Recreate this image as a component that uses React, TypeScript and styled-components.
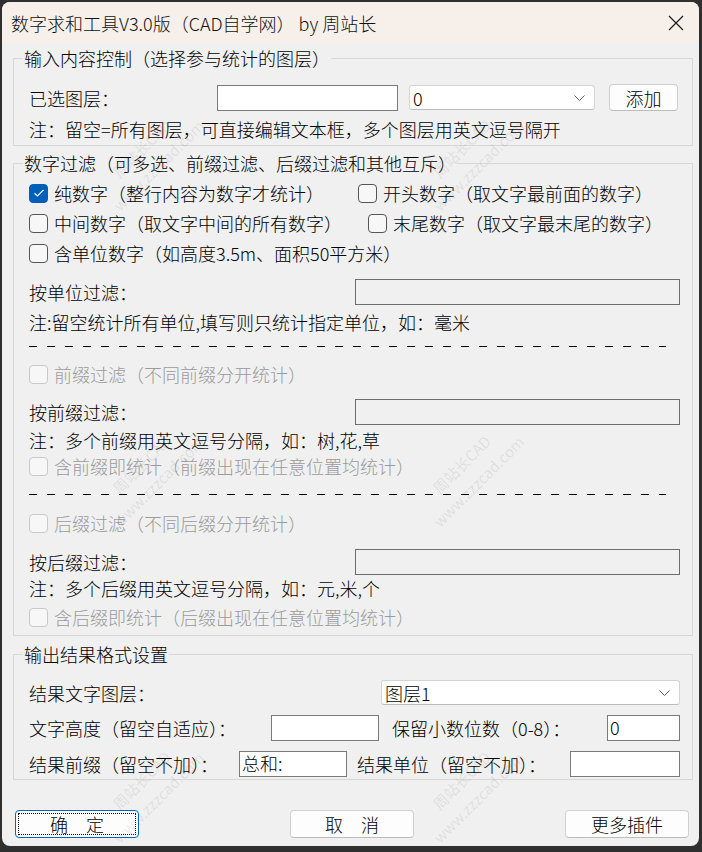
import React from 'react';
import styled, { createGlobalStyle } from 'styled-components';

const GlobalStyle = createGlobalStyle`
  html, body { margin: 0; padding: 0; background: #2f2f2f; height: 852px; overflow: hidden; }
  body { font-family: "Noto Sans CJK SC", "Noto Sans", sans-serif; }
  * { box-sizing: border-box; }
`;

const Window = styled.div`
  position: relative;
  margin: 2px 0 0 2px;
  width: 697px;
  height: 844px;
  background: #f0f0f0;
  border-radius: 8px;
  overflow: hidden;
  display: flex;
  flex-direction: column;
  font-family: "Noto Sans CJK SC", sans-serif;
  font-size: 18px;
  color: #000;
`;

const TitleBar = styled.div`
  height: 41px;
  flex: none;
  background: #f7f0ea;
  display: flex;
  align-items: center;
  justify-content: space-between;
  padding: 0 15px 0 9px;
`;

const TitleText = styled.span`
  font-size: 18px;
  line-height: 24px;
  font-weight: 300;
  color: #111;
  white-space: pre;
`;

const Content = styled.div`
  padding: 0 6px 0 11px;
  display: flex;
  flex-direction: column;
`;

const Group = styled.fieldset<{ $mt: number; $pb: number }>`
  margin: ${p => p.$mt}px 0 0 0;
  padding: 0 12px ${p => p.$pb}px 15px;
  border: 1px solid #d7d7d7;
  min-inline-size: 0;
  display: flex;
  flex-direction: column;
`;

const Legend = styled.legend`
  font-size: 18px;
  line-height: 24px;
  padding: 0 1px;
  margin-left: -6px;
  font-weight: 300;
`;

const Row = styled.div<{ $mt?: number; $h: number }>`
  margin-top: ${p => p.$mt ?? 0}px;
  height: ${p => p.$h}px;
  display: flex;
  align-items: center;
`;

const Label = styled.span<{ $w?: number; $ml?: number; $disabled?: boolean }>`
  font-size: 18px;
  line-height: 24px;
  font-weight: 300;
  white-space: nowrap;
  color: ${p => (p.$disabled ? '#9b9b9b' : '#000')};
  ${p => (p.$w ? `width: ${p.$w}px; flex: none;` : '')}
  margin-left: ${p => p.$ml ?? 0}px;
`;

const Note = styled.div<{ $mt?: number }>`
  margin-top: ${p => p.$mt ?? 0}px;
  font-size: 18px;
  line-height: 24px;
  font-weight: 300;
  white-space: nowrap;
`;

const Edit = styled.div<{ $w: number; $h?: number; $ml?: number; $disabled?: boolean; $auto?: boolean }>`
  width: ${p => p.$w}px;
  height: ${p => p.$h ?? 26}px;
  flex: none;
  margin-left: ${p => (p.$auto ? 'auto' : `${p.$ml ?? 0}px`)};
  background: ${p => (p.$disabled ? '#f0f0f0' : '#fff')};
  border: 1px solid ${p => (p.$disabled ? '#6d6d6d' : '#7a7a7a')};
  padding: 1px 2px;
  font-size: 18px;
  line-height: 20px;
  font-weight: 300;
  white-space: nowrap;
`;

const Combo = styled.div<{ $w: number; $ml?: number; $auto?: boolean }>`
  width: ${p => p.$w}px;
  height: 25px;
  flex: none;
  margin-left: ${p => (p.$auto ? 'auto' : `${p.$ml ?? 0}px`)};
  background: #fff;
  border: 1px solid #d4d4d4;
  border-bottom-color: #bdbdbd;
  border-radius: 3px;
  display: flex;
  align-items: center;
  justify-content: space-between;
  padding: 0 9px 0 3px;
  font-size: 18px;
  line-height: 22px;
  font-weight: 300;
`;

const Button = styled.button<{ $w: number; $h: number; $ml?: number; $default?: boolean }>`
  width: ${p => p.$w}px;
  height: ${p => p.$h}px;
  flex: none;
  margin-left: ${p => p.$ml ?? 0}px;
  background: #fdfdfd;
  border: 1px solid ${p => (p.$default ? '#0067c0' : '#d0d0d0')};
  border-bottom-color: ${p => (p.$default ? '#0067c0' : '#bcbcbc')};
  border-radius: 4px;
  padding: 2px;
  font-family: "Noto Sans CJK SC", sans-serif;
  font-size: 18px;
  font-weight: 300;
  color: #000;
  display: flex;
  cursor: default;
`;

const ButtonFace = styled.span<{ $focus?: boolean }>`
  flex: 1;
  display: flex;
  align-items: center;
  justify-content: center;
  border: 1px dotted ${p => (p.$focus ? '#000' : 'transparent')};
  line-height: 20px;
  white-space: pre;
`;

const CheckWrap = styled.label<{ $w?: number; $ml?: number }>`
  display: flex;
  align-items: center;
  gap: 6px;
  ${p => (p.$w ? `width: ${p.$w}px; flex: none;` : '')}
  margin-left: ${p => p.$ml ?? 0}px;
`;

const Box = styled.span<{ $checked?: boolean; $disabled?: boolean }>`
  width: 19px;
  height: 19px;
  flex: none;
  border-radius: 4px;
  display: flex;
  align-items: center;
  justify-content: center;
  background: ${p => (p.$checked ? '#005fb8' : '#f7f7f7')};
  border: 1px solid
    ${p => (p.$checked ? '#005fb8' : p.$disabled ? '#c9c9c9' : '#555555')};
`;

const Dashes = styled.div<{ $mt?: number }>`
  margin-top: ${p => p.$mt ?? 0}px;
  height: 24px;
  width: 637px;
  flex: none;
  background-image: repeating-linear-gradient(to right, #000 0 8px, transparent 8px 18px);
  background-size: 100% 1px;
  background-position: 0 12px;
  background-repeat: no-repeat;
`;

const ButtonBar = styled.div`
  margin-top: 30px;
  padding: 0 4px 0 2px;
  display: flex;
  justify-content: space-between;
`;

const Watermark = styled.div`
  position: absolute;
  top: -3px;
  left: -12px;
  display: grid;
  grid-template-columns: 320px 320px;
  grid-auto-rows: 316px;
  pointer-events: none;
`;

const MarkCell = styled.div`
  display: flex;
  align-items: center;
  justify-content: center;
`;

const Mark = styled.div`
  transform: rotate(-45deg);
  display: flex;
  flex-direction: column;
  align-items: center;
  font-family: "Noto Sans CJK SC", sans-serif;
  font-size: 15px;
  line-height: 24px;
  color: rgba(90, 90, 90, 0.12);
  white-space: nowrap;
`;

const Chevron = () => (
  <svg width="11" height="6" viewBox="0 0 11 6">
    <path d="M0.5 0.5 L5.5 5.5 L10.5 0.5" fill="none" stroke="#5a5a5a" strokeWidth="1" />
  </svg>
);

const CloseIcon = () => (
  <svg width="16" height="16" viewBox="0 0 16 16">
    <path d="M1 1 L15 15 M15 1 L1 15" stroke="#1a1a1a" strokeWidth="1.2" fill="none" />
  </svg>
);

const CheckMark = () => (
  <svg width="12" height="10" viewBox="0 0 12 10">
    <path d="M1.5 5.2 L4.5 8 L10.5 1.8" fill="none" stroke="#fff" strokeWidth="1.2" />
  </svg>
);

const Check: React.FC<{ checked?: boolean; disabled?: boolean; w?: number; ml?: number; children: React.ReactNode }> = ({
  checked,
  disabled,
  w,
  ml,
  children,
}) => (
  <CheckWrap $w={w} $ml={ml}>
    <Box $checked={checked} $disabled={disabled}>{checked && <CheckMark />}</Box>
    <Label $disabled={disabled}>{children}</Label>
  </CheckWrap>
);

export default function App() {
  return (
    <>
      <GlobalStyle />
      <Window>
        <TitleBar>
          <TitleText>数字求和工具V3.0版（CAD自学网） by 周站长</TitleText>
          <CloseIcon />
        </TitleBar>
        <Content>
          <Group $mt={3} $pb={4}>
            <Legend>输入内容控制（选择参与统计的图层）</Legend>
            <Row $mt={13} $h={29}>
              <Label $w={188}>已选图层：</Label>
              <Edit $w={181} />
              <Combo $w={186} $ml={11}>
                <span>0</span>
                <Chevron />
              </Combo>
              <Button $w={69} $h={27} $ml={14}>
                <ButtonFace>添加</ButtonFace>
              </Button>
            </Row>
            <Note $mt={5}>注：留空=所有图层，可直接编辑文本框，多个图层用英文逗号隔开</Note>
          </Group>

          <Group $mt={5} $pb={5}>
            <Legend>数字过滤（可多选、前缀过滤、后缀过滤和其他互斥）</Legend>
            <Row $mt={3} $h={30}>
              <Check checked w={329}>纯数字（整行内容为数字才统计）</Check>
              <Check>开头数字（取文字最前面的数字）</Check>
            </Row>
            <Row $h={30}>
              <Check w={339}>中间数字（取文字中间的所有数字）</Check>
              <Check>末尾数字（取文字最末尾的数字）</Check>
            </Row>
            <Row $h={30}>
              <Check>含单位数字（如高度3.5m、面积50平方米）</Check>
            </Row>
            <Row $mt={11} $h={26}>
              <Label>按单位过滤：</Label>
              <Edit $w={325} $auto $disabled />
            </Row>
            <Note $mt={5}>注:留空统计所有单位,填写则只统计指定单位，如：毫米</Note>
            <Dashes />
            <Row $mt={1} $h={30}>
              <Check disabled>前缀过滤（不同前缀分开统计）</Check>
            </Row>
            <Row $mt={10} $h={26}>
              <Label>按前缀过滤：</Label>
              <Edit $w={325} $auto $disabled />
            </Row>
            <Note $mt={3}>注：多个前缀用英文逗号分隔，如：树,花,草</Note>
            <Row $mt={1} $h={26}>
              <Check disabled>含前缀即统计（前缀出现在任意位置均统计）</Check>
            </Row>
            <Dashes $mt={3} />
            <Row $mt={2} $h={30}>
              <Check disabled>后缀过滤（不同后缀分开统计）</Check>
            </Row>
            <Row $mt={11} $h={26}>
              <Label>按后缀过滤：</Label>
              <Edit $w={325} $auto $disabled />
            </Row>
            <Note $mt={1}>注：多个后缀用英文逗号分隔，如：元,米,个</Note>
            <Row $mt={4} $h={26}>
              <Check disabled>含后缀即统计（后缀出现在任意位置均统计）</Check>
            </Row>
          </Group>

          <Group $mt={6} $pb={2}>
            <Legend>输出结果格式设置</Legend>
            <Row $mt={14} $h={25}>
              <Label>结果文字图层：</Label>
              <Combo $w={299} $auto>
                <span>图层1</span>
                <Chevron />
              </Combo>
            </Row>
            <Row $mt={10} $h={26}>
              <Label $w={242}>文字高度（留空自适应）：</Label>
              <Edit $w={108} />
              <Label $ml={13}>保留小数位数（0-8）：</Label>
              <Edit $w={73} $auto>0</Edit>
            </Row>
            <Row $mt={10} $h={26}>
              <Label $w={210}>结果前缀（留空不加）：</Label>
              <Edit $w={108}>总和:</Edit>
              <Label $ml={10}>结果单位（留空不加）：</Label>
              <Edit $w={110} $auto />
            </Row>
          </Group>

          <ButtonBar>
            <Button $w={124} $h={28} $default>
              <ButtonFace $focus>确　定</ButtonFace>
            </Button>
            <Button $w={124} $h={28}>
              <ButtonFace>取　消</ButtonFace>
            </Button>
            <Button $w={124} $h={28}>
              <ButtonFace>更多插件</ButtonFace>
            </Button>
          </ButtonBar>
        </Content>

        <Watermark>
          {Array.from({ length: 6 }).map((_, i) => (
            <MarkCell key={i}>
              <Mark>
                <span>周站长CAD</span>
                <span>www.zzzcad.com</span>
              </Mark>
            </MarkCell>
          ))}
        </Watermark>
      </Window>
    </>
  );
}
